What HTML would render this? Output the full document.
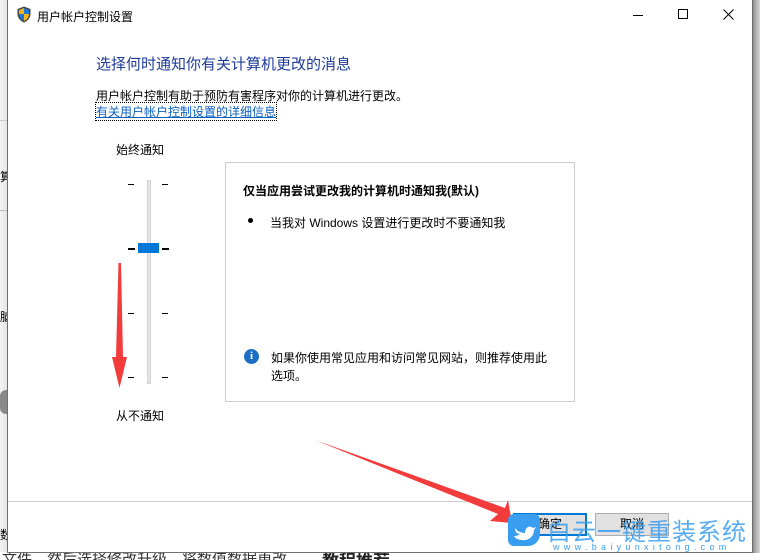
<!DOCTYPE html>
<html><head><meta charset="utf-8"><style>
*{margin:0;padding:0;box-sizing:border-box}
body{width:760px;height:560px;overflow:hidden;position:relative;background:#fff;font-family:"Liberation Sans","Noto Sans CJK SC",sans-serif;font-size:12px;color:#000}
.a{position:absolute}
</style></head><body>
<div class="a" style="left:0;top:0;width:8px;height:552px;background:linear-gradient(90deg,#f3f3f3,#e2e2e2)"></div>
<div class="a" style="left:0;top:120px;width:8px;height:1px;background:#ccc"></div>
<div class="a" style="left:0;top:210px;width:8px;height:1px;background:#bbb"></div>
<div class="a" style="left:0;top:168px;font-size:12px;width:8px;overflow:hidden">算</div>
<div class="a" style="left:0;top:308px;width:8px;overflow:hidden">脑</div>
<div class="a" style="left:0;top:526px;width:8px;overflow:hidden">数</div>
<div class="a" style="left:0;top:390px;width:7px;height:24px;background:#888;border-radius:6px 0 0 6px"></div>
<div class="a" style="left:752px;top:0;width:8px;height:560px;background:linear-gradient(90deg,#888,#d8d8d8)"></div>
<div class="a" style="left:7px;top:0;width:746px;height:553px;border:1px solid #6e6e6e;border-top:none;background:#fff"></div>
<div class="a" style="left:0;top:553px;width:760px;height:7px;background:#fff;overflow:hidden"><div style="position:absolute;left:2px;top:-5px;font-size:15px;color:#333;white-space:nowrap">文件，然后选择修改升级，将数值数据更改</div><div style="position:absolute;left:322px;top:-6px;font-size:17px;font-weight:bold;color:#222">教程推荐</div></div>
<svg class="a" style="left:17px;top:6px" width="14" height="17" viewBox="0 0 14 17"><path d="M7 0.5 L13.5 3 V8 C13.5 12 10.5 15 7 16.5 C3.5 15 0.5 12 0.5 8 V3 Z" fill="#444"/><path d="M7 2 L12 4 V8 H7Z" fill="#1b78d6"/><path d="M2 4 L7 2 V8 H2Z" fill="#f2b31d"/><path d="M2 8 H7 V15 C4 13.8 2 11.5 2 8Z" fill="#1b78d6"/><path d="M7 8 H12 C12 11.5 10 13.8 7 15Z" fill="#f2b31d"/></svg>
<div class="a" style="left:37px;top:8px;font-size:12px">用户帐户控制设置</div>
<div class="a" style="left:633px;top:15px;width:10px;height:1px;background:#000"></div>
<div class="a" style="left:678px;top:9px;width:10px;height:10px;border:1px solid #000"></div>
<svg class="a" style="left:723px;top:9px" width="11" height="11"><path d="M0.5 0.5L10.5 10.5M10.5 0.5L0.5 10.5" stroke="#000" stroke-width="1"/></svg>
<div class="a" style="left:96px;top:53px;font-size:15px;color:#1e3b9a">选择何时通知你有关计算机更改的消息</div>
<div class="a" style="left:96px;top:87px">用户帐户控制有助于预防有害程序对你的计算机进行更改。</div>
<div class="a" style="left:96px;top:103px;color:#0b5fc4;text-decoration:underline;outline:1px dotted #000">有关用户帐户控制设置的详细信息</div>
<div class="a" style="left:116px;top:141px">始终通知</div>
<div class="a" style="left:116px;top:407px">从不通知</div>
<div class="a" style="left:147px;top:180px;width:4px;height:204px;background:#e6e6e6;border:1px solid #d2d2d2"></div>
<div class="a" style="left:138px;top:243px;width:21px;height:10px;background:#0078d7"></div>
<div class="a" style="left:128px;top:184px;width:6px;height:1px;background:#000"></div><div class="a" style="left:162px;top:184px;width:6px;height:1px;background:#000"></div>
<div class="a" style="left:128px;top:248px;width:7px;height:2px;background:#000"></div><div class="a" style="left:162px;top:248px;width:7px;height:2px;background:#000"></div>
<div class="a" style="left:128px;top:313px;width:6px;height:1px;background:#000"></div><div class="a" style="left:162px;top:313px;width:6px;height:1px;background:#000"></div>
<div class="a" style="left:128px;top:377px;width:6px;height:1px;background:#000"></div><div class="a" style="left:162px;top:377px;width:6px;height:1px;background:#000"></div>
<svg class="a" style="left:100px;top:260px" width="40" height="130"><path d="M18.5 3 L21 3 L23 97 L27 97 L19.5 128 L12 97 L16 97Z" fill="#f23c3c"/></svg>
<div class="a" style="left:225px;top:162px;width:350px;height:240px;border:1px solid #ccc"></div>
<div class="a" style="left:243px;top:182px;font-weight:bold">仅当应用尝试更改我的计算机时通知我(默认)</div>
<div class="a" style="left:248px;top:218px;width:5px;height:5px;border-radius:50%;background:#000"></div>
<div class="a" style="left:270px;top:214px">当我对 Windows 设置进行更改时不要通知我</div>
<div class="a" style="left:244px;top:349px;width:15px;height:15px;border-radius:50%;background:#1a6fc4;color:#fff;font-weight:bold;font-size:11px;text-align:center;line-height:15px;font-family:'Liberation Serif',serif">i</div>
<div class="a" style="left:271px;top:349px;width:282px;line-height:18px">如果你使用常见应用和访问常见网站，则推荐使用此选项。</div>
<div class="a" style="left:8px;top:501px;width:744px;height:1px;background:#ccc"></div>
<div class="a" style="left:513px;top:513px;width:74px;height:23px;border:2px solid #0078d7;background:#e1e1e1;text-align:center;line-height:19px">确定</div>
<div class="a" style="left:595px;top:513px;width:74px;height:23px;border:1px solid #adadad;background:#e1e1e1;text-align:center;line-height:21px">取消</div>
<svg class="a" style="left:300px;top:430px" width="220" height="100"><path d="M15 10 L205 78 L208 70 L212 93 L190 91 L198 84 Z" fill="#f23c3c"/></svg>
<div class="a" style="left:508px;top:514px;width:32px;height:32px;background:#3a9ef0;border-radius:6px 6px 12px 6px"></div>
<svg class="a" style="left:512px;top:520px" width="26" height="22"><path d="M3 8 C6 12 10 13 13 13 C13 7 18 5 21 8 L24 7 L22 10 C22 16 17 21 10 20 C6 20 3 18 2 16 C5 16 7 15 8 14 C5 14 3 12 3 8Z" fill="#fff"/></svg>
<div class="a" style="left:547px;top:512px;font-size:24px;color:#3a9ef0;letter-spacing:1px;white-space:nowrap;opacity:.85">白云一键重装系统</div>
<div class="a" style="left:553px;top:542px;font-size:9px;color:#3a9ef0;letter-spacing:4.3px;white-space:nowrap">www.baiyunxitong.com</div>
</body></html>
